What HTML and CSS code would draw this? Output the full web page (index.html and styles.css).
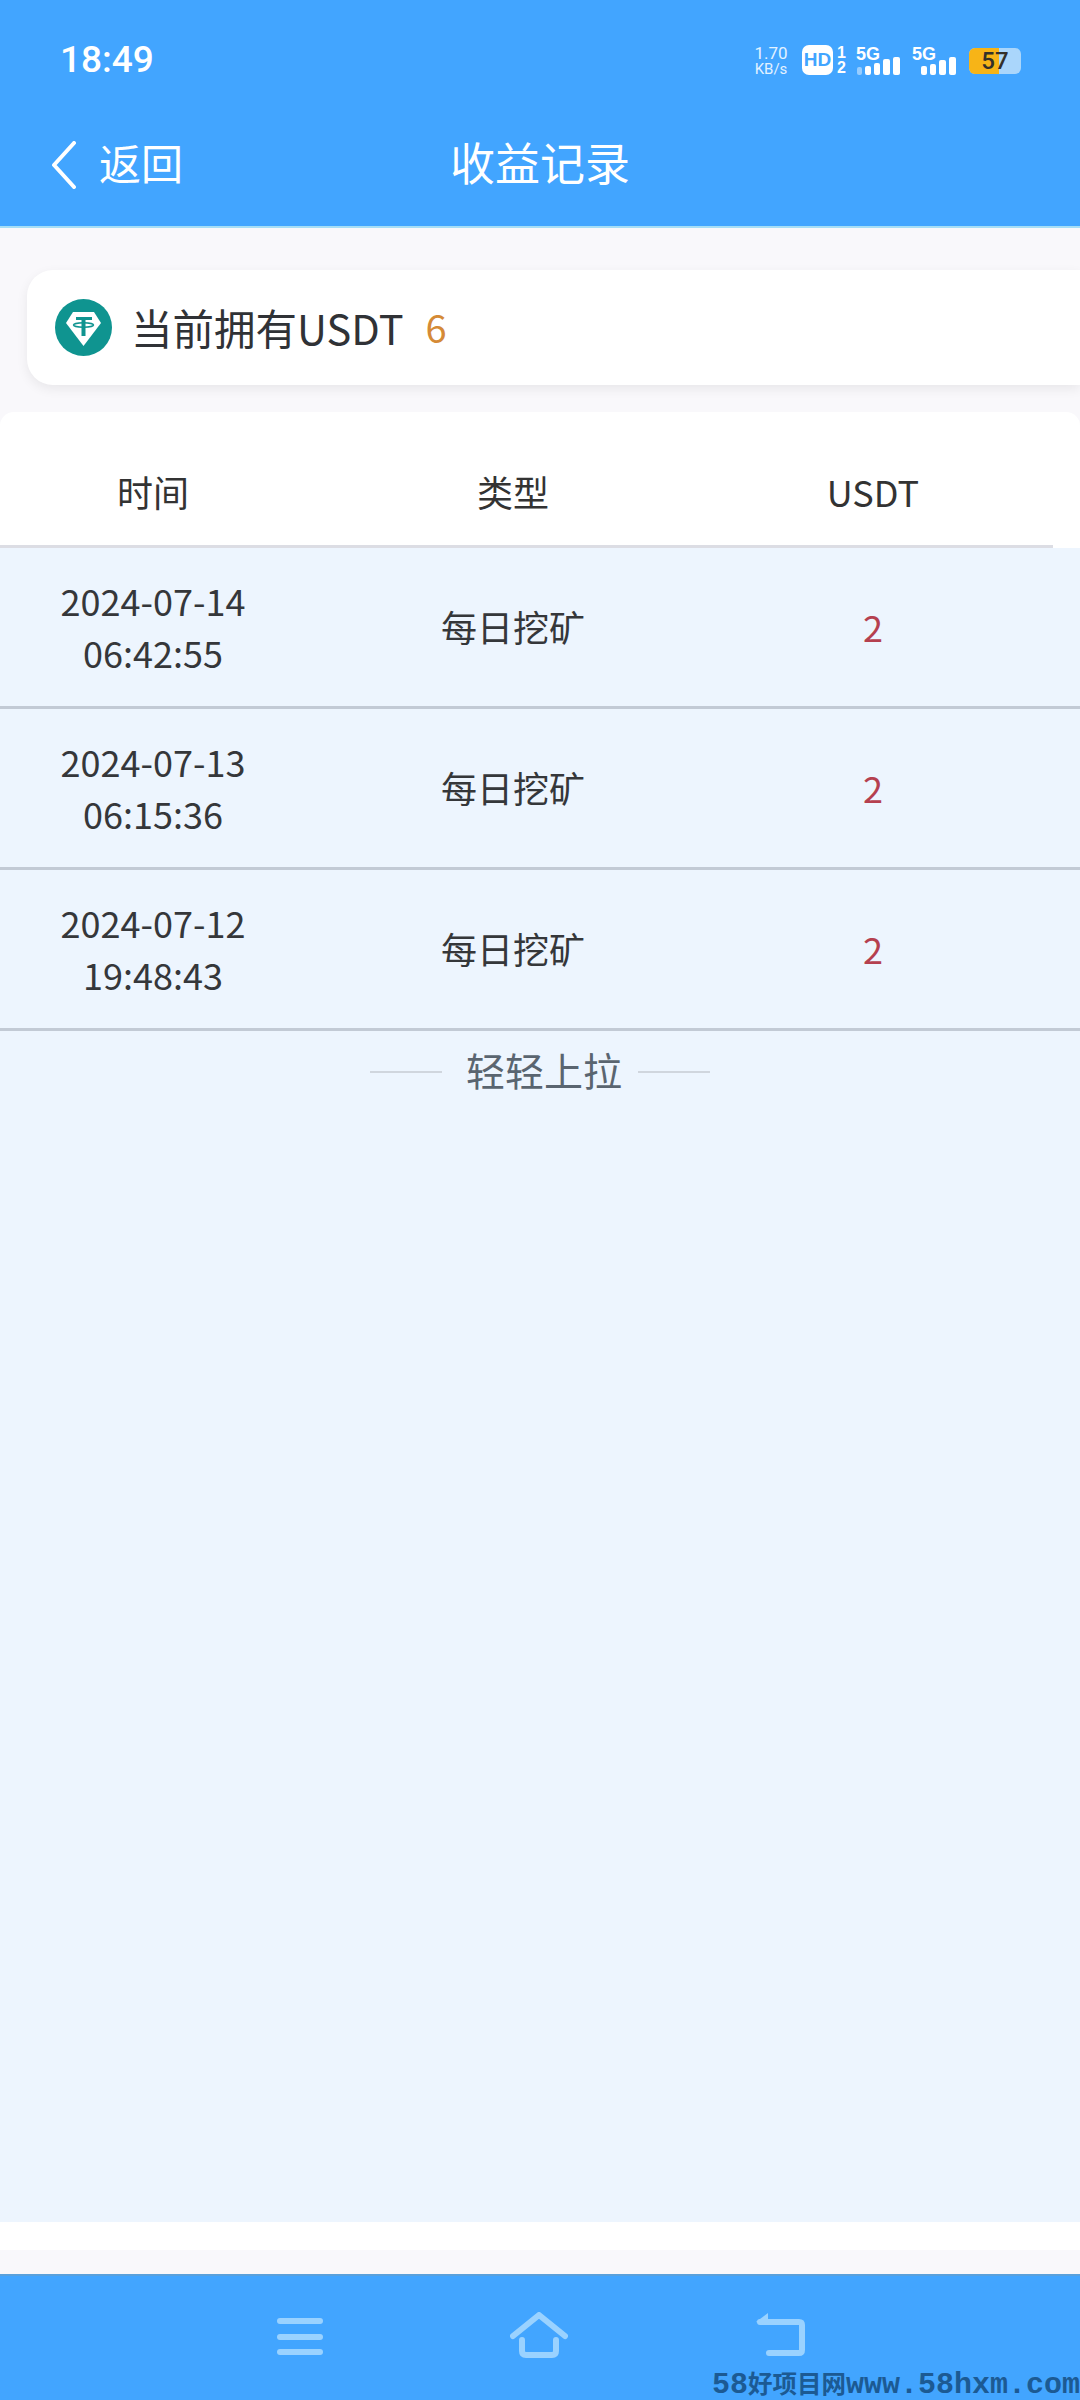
FILE: index.html
```html
<!DOCTYPE html>
<html lang="zh-CN">
<head>
    <meta charset="UTF-8">
    <meta name="viewport" content="width=device-width, initial-scale=1.0">
    <title>收益记录</title>
    <link rel="stylesheet" href="styles.css">
</head>
<body>
    <header class="top-bar">
        <div class="status-bar">
            <span class="clock">18:49</span>
            <div class="status-icons">
                <div class="net-speed"><span>1.70</span><span class="net-unit">KB/s</span></div>
                <span class="hd-badge">HD</span>
                <div class="sim-nums"><span>1</span><span>2</span></div>
                <svg class="signal signal-one" width="44" height="30" viewBox="0 0 44 30">
                    <text x="0" y="15" class="signal-label">5G</text>
                    <rect x="1" y="22" width="5" height="8" rx="2" opacity="0.45"/>
                    <rect x="9" y="21" width="6" height="9" rx="2"/>
                    <rect x="18" y="18" width="6" height="12" rx="2"/>
                    <rect x="27" y="14" width="7" height="16" rx="2"/>
                    <rect x="37" y="12" width="7" height="18" rx="2"/>
                </svg>
                <svg class="signal" width="44" height="30" viewBox="0 0 44 30">
                    <text x="0" y="15" class="signal-label">5G</text>
                    <rect x="9" y="21" width="6" height="9" rx="2"/>
                    <rect x="18" y="19" width="6" height="11" rx="2"/>
                    <rect x="27" y="15" width="7" height="15" rx="2"/>
                    <rect x="37" y="12" width="7" height="18" rx="2"/>
                </svg>
                <div class="battery"><span class="battery-fill"></span><span class="battery-num">57</span></div>
            </div>
        </div>
        <div class="nav-bar">
            <a class="back-link">
                <svg width="26" height="48" viewBox="0 0 26 48"><path d="M23 2 L3 24 L23 46" fill="none" stroke="#fff" stroke-width="4" stroke-linecap="round" stroke-linejoin="round"/></svg>
                <span>返回</span>
            </a>
            <h1 class="nav-title">收益记录</h1>
        </div>
    </header>

    <main class="content">
        <section class="balance-card">
            <svg class="coin" width="57" height="57" viewBox="0 0 57 57">
                <circle cx="28.5" cy="28.5" r="28.5" fill="#0f9490"/>
                <path d="M18 13 H39 L46 24 L28.5 47 L11 24 Z" fill="#fff"/>
                <path d="M21 18 H37 V21 H30.5 V37 H26.5 V21 H21 Z" fill="#0f9490"/>
                <ellipse cx="28.5" cy="26" rx="10" ry="2.2" fill="none" stroke="#0f9490" stroke-width="1.5"/>
            </svg>
            <span class="balance-label">当前拥有USDT</span>
            <span class="balance-num">6</span>
        </section>

        <section class="records">
            <div class="record-head">
                <span>时间</span>
                <span>类型</span>
                <span>USDT</span>
            </div>
            <div class="record-list">
                <div class="record-row">
                    <span>2024-07-14<br>06:42:55</span>
                    <span>每日挖矿</span>
                    <span class="amount">2</span>
                </div>
                <div class="record-row">
                    <span>2024-07-13<br>06:15:36</span>
                    <span>每日挖矿</span>
                    <span class="amount">2</span>
                </div>
                <div class="record-row">
                    <span>2024-07-12<br>19:48:43</span>
                    <span>每日挖矿</span>
                    <span class="amount">2</span>
                </div>
                <div class="pull-hint">
                    <i></i>
                    <span>轻轻上拉</span>
                    <i></i>
                </div>
            </div>
            <div class="records-foot"></div>
        </section>
    </main>

    <footer class="bottom-bar">
        <svg width="46" height="38" viewBox="0 0 46 38" class="sys-icon sys-menu">
            <rect x="0" y="0" width="46" height="6" rx="3"/>
            <rect x="0" y="16" width="46" height="6" rx="3"/>
            <rect x="0" y="31" width="46" height="6" rx="3"/>
        </svg>
        <svg width="58" height="46" viewBox="0 0 58 46" class="sys-icon">
            <path d="M3 24 L29 3 L55 24 M12 28 V39 Q12 43 16 43 H42 Q46 43 46 39 V28" fill="none" stroke="#9ad2ff" stroke-width="6" stroke-linecap="round" stroke-linejoin="round"/>
        </svg>
        <svg width="50" height="44" viewBox="0 0 50 44" class="sys-icon">
            <path d="M5 10 H44 Q47 10 47 13 V38 Q47 41 44 41 H14" fill="none" stroke="#9ad2ff" stroke-width="6" stroke-linecap="round"/>
            <path d="M1 10 L13 1 V13 Z" fill="#9ad2ff"/>
        </svg>
    </footer>
    <div class="watermark">58<span class="watermark-cn">好项目网</span>www.58hxm.com</div>
</body>
</html>
```

FILE: styles.css
```css
* { box-sizing: border-box; }
html, body { margin: 0; padding: 0; }
body { position: relative; width: 1080px; height: 2400px; overflow: hidden; display: flex; flex-direction: column; background: #f9f8fb; color: #333; font-family: "Noto Sans CJK SC", "Noto Sans", sans-serif; }

.top-bar { height: 228px; flex: none; background: #42a5ff; border-bottom: 2px solid #a6def6; color: #fff; }
.status-bar { height: 120px; padding: 0 60px 0 60px; display: flex; justify-content: space-between; align-items: flex-start; }
.clock { margin-top: 36px; font-family: Roboto, sans-serif; font-size: 37px; font-weight: 500; line-height: 48px; }
.status-icons { margin-top: 45px; margin-right: -1px; display: flex; align-items: flex-start; }
.net-speed { width: 36px; display: flex; flex-direction: column; align-items: center; font-family: Roboto, sans-serif; font-size: 17px; line-height: 16px; color: #e3f2ff; }
.net-unit { font-size: 15px; }
.hd-badge { width: 31px; height: 30px; margin-left: 13px; background: #fff; border-radius: 7px; color: #42a5ff; font-family: "Liberation Sans", sans-serif; font-weight: bold; font-size: 19px; line-height: 30px; text-align: center; }
.sim-nums { width: 11px; margin-left: 3px; display: flex; flex-direction: column; font-family: "Liberation Sans", sans-serif; font-weight: bold; font-size: 16px; line-height: 15px; text-align: center; }
.signal { fill: #fff; }
.signal-one { margin-left: 9px; }
.signal + .signal { margin-left: 12px; }
.signal-label { font-family: "Liberation Sans", sans-serif; font-weight: bold; font-size: 18px; }
.battery { position: relative; width: 52px; height: 26px; margin-left: 13px; margin-top: 3px; background: #aad6fb; border-radius: 6px; overflow: hidden; color: #33302a; font-family: Roboto, sans-serif; font-size: 24px; font-weight: 500; line-height: 26px; text-align: center; }
.battery-fill { position: absolute; left: 0; top: 0; width: 30px; height: 26px; background: #f7b417; }
.battery-num { position: relative; }

.nav-bar { position: relative; height: 106px; display: flex; align-items: center; justify-content: center; }
.back-link { position: absolute; left: 51px; top: 21px; display: flex; align-items: center; gap: 22px; font-size: 42px; line-height: 48px; }
.back-link span { margin-top: -6px; }
.nav-title { margin: -22px 0 0; font-size: 45px; font-weight: 400; line-height: 60px; }

.content { flex: 1; display: flex; flex-direction: column; min-height: 0; }
.balance-card { height: 115px; margin: 42px 0 0 27px; padding-left: 28px; display: flex; align-items: center; background: #fff; border-radius: 26px 0 0 26px; box-shadow: 0 4px 12px rgba(0, 0, 0, 0.07); }
.coin { flex: none; }
.balance-label { margin: 0 0 2px 19px; font-size: 41.5px; line-height: 60px; color: #303236; }
.balance-num { margin: 0 0 2px 22px; font-size: 38px; line-height: 60px; color: #d58a36; }

.records { flex: 1; margin-top: 27px; display: flex; flex-direction: column; min-height: 0; background: #fff; border-radius: 14px 14px 0 0; }
.record-head { height: 136px; width: 1080px; margin-left: -27px; padding-top: 25px; display: grid; grid-template-columns: repeat(3, 360px); align-items: center; text-align: center; border-bottom: 3px solid #dcdde4; font-size: 36px; color: #333; clip-path: inset(0 0 0 27px); }
.record-list { flex: 1; background: #edf5fe; }
.record-row { height: 161px; width: 1080px; margin-left: -27px; padding-bottom: 6px; display: grid; grid-template-columns: repeat(3, 360px); align-items: center; text-align: center; font-size: 36px; line-height: 52px; color: #35373a; position: relative; }
.record-row::after { content: ""; position: absolute; left: 27px; right: -27px; bottom: 0; height: 3px; background: #c2cad5; }
.amount { color: #b5404f; }
.pull-hint { height: 82px; display: flex; align-items: center; justify-content: center; gap: 20px; font-size: 39px; color: #5a6570; }
.pull-hint i { display: block; width: 72px; height: 2px; background: #d0d6de; }
.pull-hint span { margin: 0 -4px 6px 4px; line-height: 56px; }
.records-foot { flex: none; height: 28px; }

.bottom-bar { flex: none; height: 126px; margin-top: 24px; padding: 36px 0 0 277px; display: flex; align-items: flex-start; gap: 187px; background: #42a5ff; border-top: 2px solid #5aa1dc; }
.sys-icon { flex: none; fill: #9ad2ff; }
.sys-menu { margin-top: 6px; }
.watermark { position: absolute; right: 0; bottom: 0; font-family: "Liberation Mono", monospace; font-weight: bold; font-size: 30px; line-height: 30px; color: #1c5a93; white-space: nowrap; }
.watermark-cn { font-family: "Noto Sans CJK SC", sans-serif; font-size: 24.5px; font-weight: 700; }
```
